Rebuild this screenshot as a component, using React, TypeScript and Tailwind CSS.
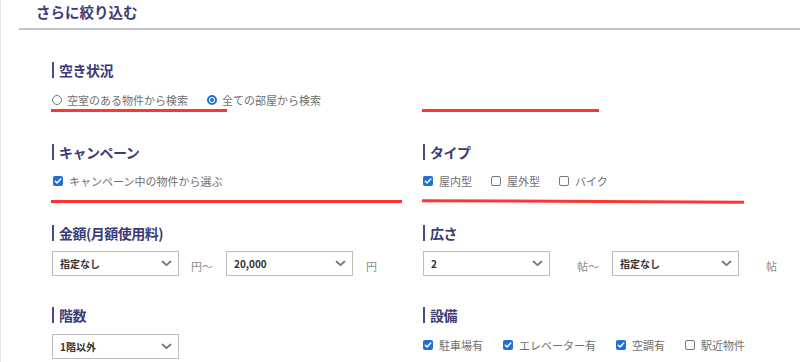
import React from "react";

const font = { fontFamily: '"Noto Sans CJK JP", "Noto Sans", sans-serif' };

function Heading({ children }: { children: React.ReactNode }) {
  return (
    <div className="flex items-center h-[18px]">
      <span className="w-[2px] h-[16px] bg-[#4b4a86] mr-[5px]" />
      <span className="text-[14px] font-bold text-[#3c3b78] leading-[18px] tracking-[-0.5px]">{children}</span>
    </div>
  );
}

function Check({ checked, label }: { checked?: boolean; label: string }) {
  return (
    <div className="flex items-center">
      {checked ? (
        <span className="w-[10px] h-[10px] rounded-[2px] bg-[#1f6fd6] flex items-center justify-center">
          <svg width="8" height="8" viewBox="0 0 8 8">
            <path d="M1.3 4.2 L3.1 6 L6.7 2" stroke="#fff" strokeWidth="1.5" fill="none" strokeLinecap="round" strokeLinejoin="round" />
          </svg>
        </span>
      ) : (
        <span className="w-[10px] h-[10px] rounded-[2px] border border-[#777] bg-white" />
      )}
      <span className="ml-[6px] text-[11px] text-[#6f6f6f] leading-[16px]">{label}</span>
    </div>
  );
}

function Radio({ checked, label }: { checked?: boolean; label: string }) {
  return (
    <div className="flex items-center">
      {checked ? (
        <span className="w-[10px] h-[10px] rounded-full border-[2px] border-[#1f6fd6] flex items-center justify-center">
          <span className="w-[4px] h-[4px] rounded-full bg-[#1f6fd6]" />
        </span>
      ) : (
        <span className="w-[10px] h-[10px] rounded-full border border-[#777]" />
      )}
      <span className="ml-[5px] text-[11px] text-[#6f6f6f] leading-[16px]">{label}</span>
    </div>
  );
}

function Select({ value }: { value: string }) {
  return (
    <div className="w-[127px] h-[25px] border border-[#bdbdbd] bg-white flex items-center justify-between pl-[7px] pr-[6px]">
      <span className="text-[10px] font-bold text-[#333] leading-none">{value}</span>
      <svg width="11" height="7" viewBox="0 0 11 7">
        <path d="M1.5 1.5 L5.5 5.2 L9.5 1.5" stroke="#777" strokeWidth="1.8" fill="none" strokeLinecap="round" strokeLinejoin="round" />
      </svg>
    </div>
  );
}

function Unit({ children }: { children: React.ReactNode }) {
  return <span className="text-[11px] text-[#8a8a8a] leading-none">{children}</span>;
}

export default function App() {
  return (
    <div className="relative w-[800px] h-[362px] bg-white overflow-hidden border-l border-[#e6e6e6]" style={font}>
      <div className="ml-[18px] h-[30px] pl-[17px] pt-[2px] border-b-2 border-[#c3c4cf]">
        <div className="text-[14.5px] font-bold text-[#3c3b78] leading-[20px]">さらに絞り込む</div>
      </div>

      <div className="pl-[51px] pt-[31px] grid grid-cols-[371px_1fr] grid-rows-[82px_81px_82px_82px]">
        {/* Row 1 */}
        <div>
          <Heading>空き状況</Heading>
          <div className="mt-[13px] flex items-center gap-[19px]">
            <Radio label="空室のある物件から検索" />
            <Radio checked label="全ての部屋から検索" />
          </div>
        </div>
        <div />

        {/* Row 2 */}
        <div>
          <Heading>キャンペーン</Heading>
          <div className="mt-[12px] flex items-center pl-[1px]">
            <Check checked label="キャンペーン中の物件から選ぶ" />
          </div>
        </div>
        <div>
          <Heading>タイプ</Heading>
          <div className="mt-[12px] flex items-center gap-[19px]">
            <Check checked label="屋内型" />
            <Check label="屋外型" />
            <Check label="バイク" />
          </div>
        </div>

        {/* Row 3 */}
        <div>
          <Heading>金額(月額使用料)</Heading>
          <div className="mt-[9px] flex items-center">
            <Select value="指定なし" />
            <span className="ml-[12px] mr-[13px]"><Unit>円〜</Unit></span>
            <Select value="20,000" />
            <span className="ml-[13px]"><Unit>円</Unit></span>
          </div>
        </div>
        <div>
          <Heading>広さ</Heading>
          <div className="mt-[9px] flex items-center">
            <Select value="2" />
            <span className="ml-[27px] mr-[13px]"><Unit>帖〜</Unit></span>
            <Select value="指定なし" />
            <span className="ml-[27px]"><Unit>帖</Unit></span>
          </div>
        </div>

        {/* Row 4 */}
        <div>
          <Heading>階数</Heading>
          <div className="mt-[10px] flex items-center">
            <Select value="1階以外" />
          </div>
        </div>
        <div>
          <Heading>設備</Heading>
          <div className="mt-[13px] flex items-center gap-[20px]">
            <Check checked label="駐車場有" />
            <Check checked label="エレベーター有" />
            <Check checked label="空調有" />
            <Check label="駅近物件" />
          </div>
        </div>
      </div>

      {/* red annotation marks */}
      <div className="absolute left-[50px] top-[109px] w-[176px] h-[3px] bg-[#ff3535]" />
      <div className="absolute left-[421px] top-[109px] w-[177px] h-[3px] bg-[#ff3535]" />
      <div className="absolute left-[50px] top-[200px] w-[351px] h-[3px] bg-[#ff3535]" />
      <div className="absolute left-[421px] top-[200px] w-[322px] h-[3px] bg-[#ff3535] rotate-[0.3deg]" />
    </div>
  );
}
